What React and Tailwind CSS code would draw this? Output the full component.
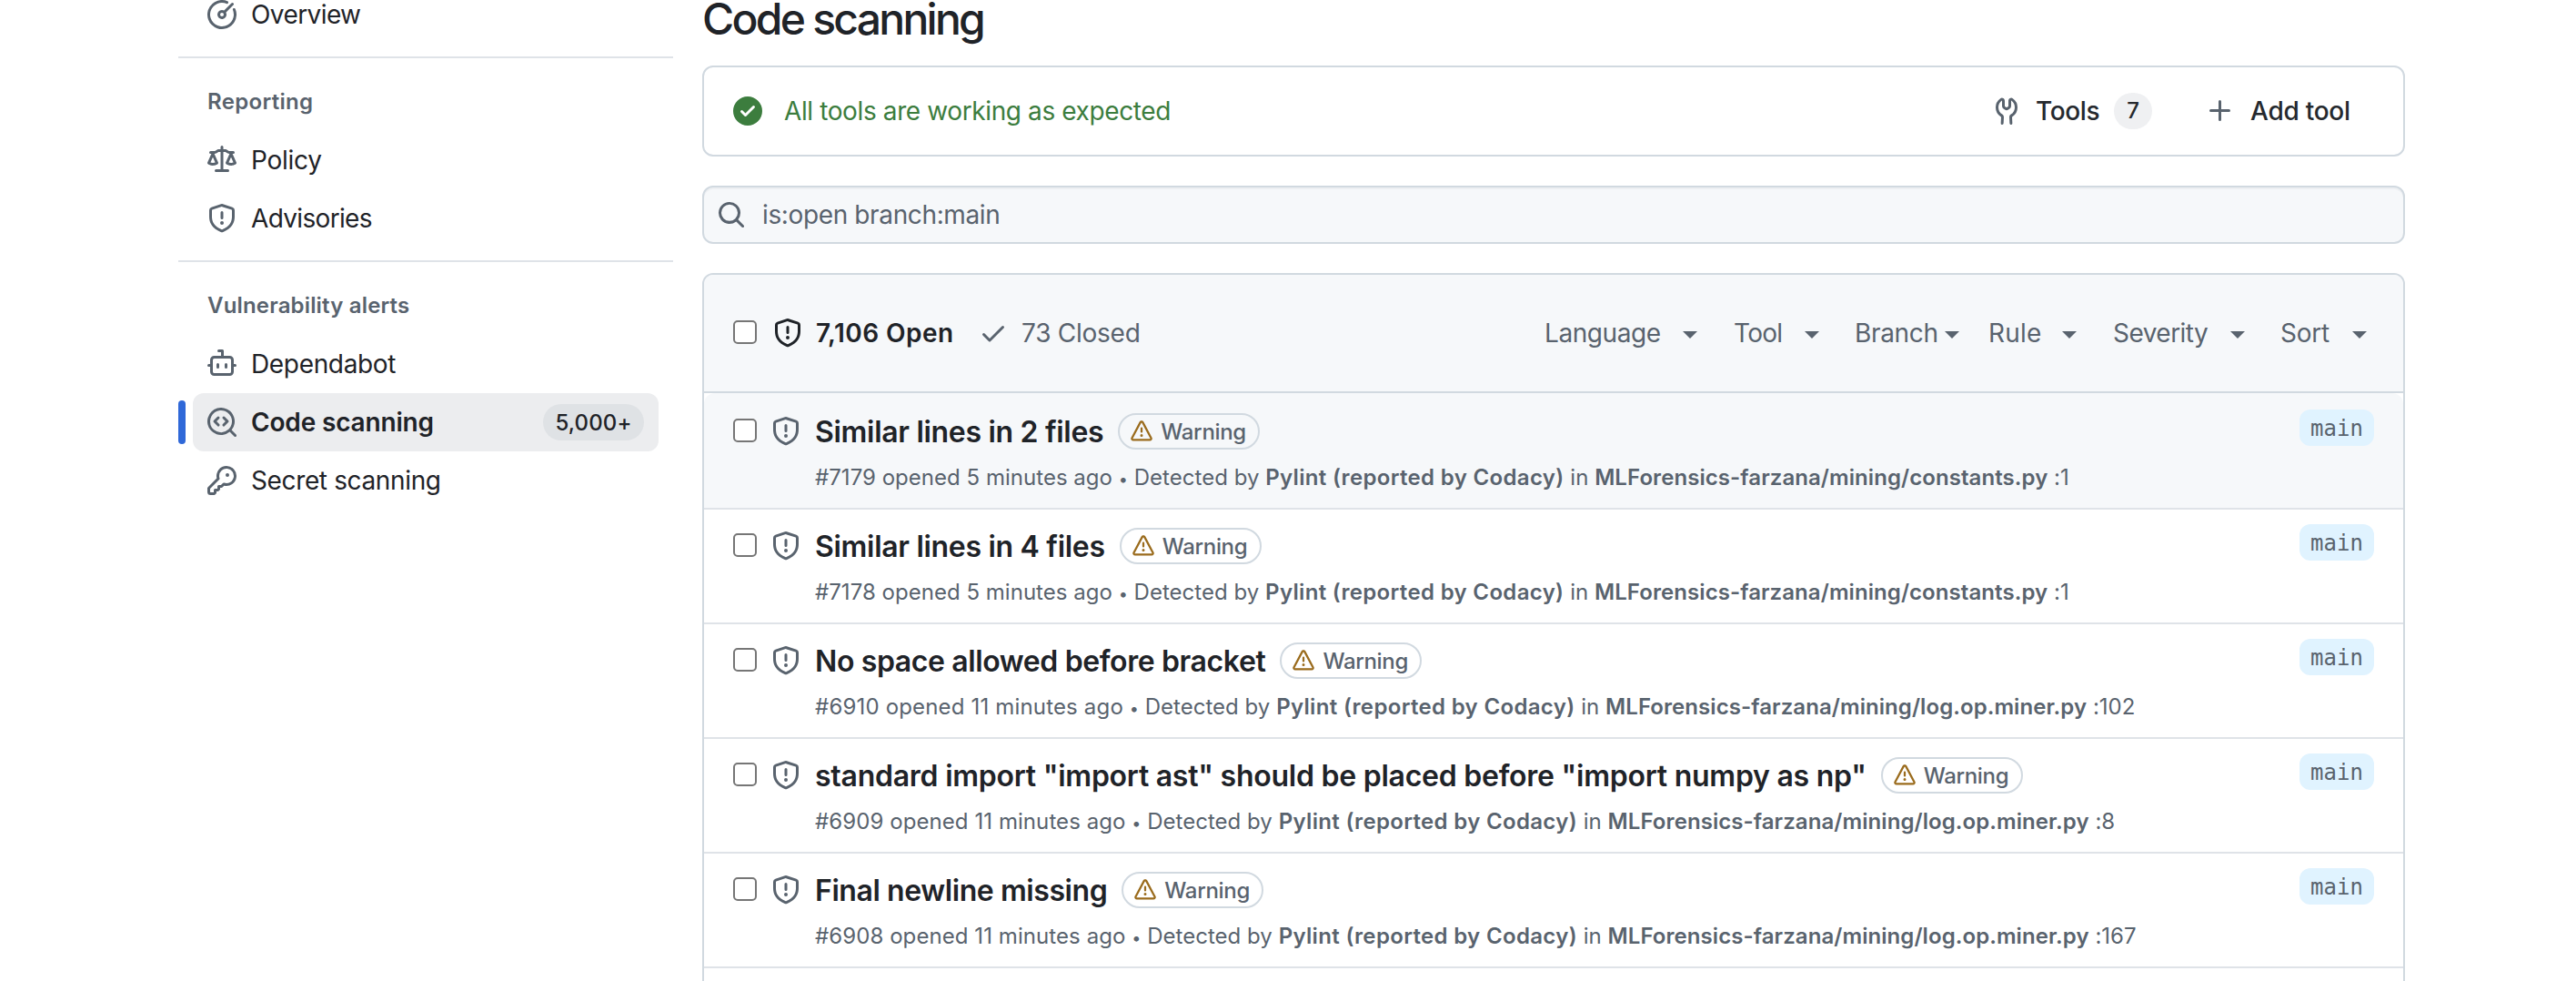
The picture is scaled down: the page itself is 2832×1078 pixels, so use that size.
import React from "react";

const ICONS = {
  meter: [
    "M8 1.5a6.5 6.5 0 1 0 6.016 4.035.75.75 0 0 1 1.388-.57 8 8 0 1 1-4.37-4.37.75.75 0 0 1-.569 1.389A6.479 6.479 0 0 0 8 1.5Zm6.28.22a.75.75 0 0 1 0 1.06l-4.063 4.064a2.5 2.5 0 1 1-1.06-1.06L13.22 1.72a.75.75 0 0 1 1.06 0ZM7 8a1 1 0 1 0 2 0 1 1 0 0 0-2 0Z",
  ],
  law: [
    "M8.75.75V2h.985c.304 0 .603.08.867.231l1.29.736c.038.022.08.033.124.033h2.234a.75.75 0 0 1 0 1.5h-.427l2.111 4.692a.75.75 0 0 1-.154.838l-.53-.53.529.531-.001.002-.002.002-.006.006-.006.005-.01.01-.045.04c-.21.176-.441.327-.686.45C14.556 10.78 13.88 11 13 11a4.498 4.498 0 0 1-2.023-.454 3.544 3.544 0 0 1-.686-.45l-.045-.04-.016-.015-.006-.006-.004-.004v-.001a.75.75 0 0 1-.154-.838L12.178 4.5h-.162c-.305 0-.604-.079-.868-.231l-1.29-.736a.245.245 0 0 0-.124-.033H8.75V13h2.5a.75.75 0 0 1 0 1.5h-6.5a.75.75 0 0 1 0-1.5h2.5V3.5h-.984a.245.245 0 0 0-.124.033l-1.289.737c-.265.15-.564.23-.869.23h-.162l2.112 4.692a.75.75 0 0 1-.154.838l-.53-.53.529.531-.001.002-.002.002-.006.006-.016.015-.045.04c-.21.176-.441.327-.686.45C4.556 10.78 3.88 11 3 11a4.498 4.498 0 0 1-2.023-.454 3.544 3.544 0 0 1-.686-.45l-.045-.04-.016-.015-.006-.006-.004-.004v-.001a.75.75 0 0 1-.154-.838L2.178 4.5H1.75a.75.75 0 0 1 0-1.5h2.234a.249.249 0 0 0 .125-.033l1.288-.737c.265-.15.564-.23.869-.23h.984V.75a.75.75 0 0 1 1.5 0Zm2.945 8.477c.285.135.718.273 1.305.273s1.02-.138 1.305-.273L13 6.327Zm-10 0c.285.135.718.273 1.305.273s1.02-.138 1.305-.273L3 6.327Z",
  ],
  shield: [
    "M7.467.133a1.748 1.748 0 0 1 1.066 0l5.25 1.68A1.75 1.75 0 0 1 15 3.48V7c0 1.566-.32 3.182-1.303 4.682-.983 1.498-2.585 2.813-5.032 3.855a1.697 1.697 0 0 1-1.33 0c-2.447-1.042-4.049-2.357-5.032-3.855C1.32 10.182 1 8.566 1 7V3.48a1.755 1.755 0 0 1 1.217-1.667Zm.61 1.429a.25.25 0 0 0-.153 0l-5.25 1.68a.25.25 0 0 0-.174.238V7c0 1.358.275 2.666 1.057 3.86.784 1.194 2.121 2.34 4.366 3.297a.196.196 0 0 0 .154 0c2.245-.956 3.582-2.104 4.366-3.298C13.225 9.666 13.5 8.36 13.5 7V3.48a.251.251 0 0 0-.174-.237l-5.25-1.68ZM8.75 4.75v3a.75.75 0 0 1-1.5 0v-3a.75.75 0 0 1 1.5 0ZM9 10.5a1 1 0 1 1-2 0 1 1 0 0 1 2 0Z",
  ],
  dependabot: [
    "M5.75 7.5a.75.75 0 0 1 .75.75v1.5a.75.75 0 0 1-1.5 0v-1.5a.75.75 0 0 1 .75-.75Zm5.25.75a.75.75 0 0 0-1.5 0v1.5a.75.75 0 0 0 1.5 0v-1.5Z",
    "M6.25 0h2A.75.75 0 0 1 9 .75V3.5h3.25a2.25 2.25 0 0 1 2.25 2.25V8h.75a.75.75 0 0 1 0 1.5h-.75v2.75a2.25 2.25 0 0 1-2.25 2.25h-8.5a2.25 2.25 0 0 1-2.25-2.25V9.5H.75a.75.75 0 0 1 0-1.5h.75V5.75A2.25 2.25 0 0 1 3.75 3.5H7.5v-2H6.25a.75.75 0 0 1 0-1.5ZM3 5.75v6.5c0 .414.336.75.75.75h8.5a.75.75 0 0 0 .75-.75v-6.5a.75.75 0 0 0-.75-.75h-8.5a.75.75 0 0 0-.75.75Z",
  ],
  codescan: [
    "M8.47 4.97a.75.75 0 0 0 0 1.06L9.94 7.5 8.47 8.97a.75.75 0 1 0 1.06 1.06l2-2a.75.75 0 0 0 0-1.06l-2-2a.75.75 0 0 0-1.06 0ZM6.53 6.03a.75.75 0 0 0-1.06-1.06l-2 2a.75.75 0 0 0 0 1.06l2 2a.75.75 0 1 0 1.06-1.06L5.06 7.5l1.47-1.47Z",
    "M12.246 13.307a7.501 7.501 0 1 1 1.06-1.06l2.474 2.473a.749.749 0 0 1-.326 1.275.749.749 0 0 1-.734-.215ZM1.5 7.5a6.002 6.002 0 0 0 3.608 5.504 6.002 6.002 0 0 0 6.486-1.117.748.748 0 0 1 .292-.293A6 6 0 1 0 1.5 7.5Z",
  ],
  key: [
    "M10.5 0a5.499 5.499 0 1 1-1.288 10.848l-.932.932a.749.749 0 0 1-.53.22H7v.75a.749.749 0 0 1-.22.53l-.5.5a.749.749 0 0 1-.53.22H5v.75a.749.749 0 0 1-.22.53l-.5.5a.749.749 0 0 1-.53.22h-2A1.75 1.75 0 0 1 0 14.25v-2c0-.199.079-.389.22-.53l4.932-4.932A5.5 5.5 0 0 1 10.5 0Zm-4 5.5c-.001.431.069.86.205 1.269a.75.75 0 0 1-.181.768L1.5 12.56v1.69c0 .138.112.25.25.25h1.69l.06-.06v-1.19a.75.75 0 0 1 .75-.75h1.19l.06-.06v-1.19a.75.75 0 0 1 .75-.75h1.19l1.023-1.025a.75.75 0 0 1 .768-.18A4 4 0 1 0 6.5 5.5ZM11 6a1 1 0 1 1 0-2 1 1 0 0 1 0 2Z",
  ],
  checkCircle: [
    "M8 16A8 8 0 1 1 8 0a8 8 0 0 1 0 16Zm3.78-9.72a.751.751 0 0 0-.018-1.042.751.751 0 0 0-1.042-.018L6.75 9.19 5.28 7.72a.751.751 0 0 0-1.042.018.751.751 0 0 0-.018 1.042l2 2a.75.75 0 0 0 1.06 0Z",
  ],
  tools: [
    "M5.433 2.304A4.492 4.492 0 0 0 3.5 6c0 1.598.832 3.002 2.09 3.802.518.328.929.923.902 1.64v.008l-.164 3.337a.75.75 0 1 1-1.498-.073l.163-3.33c.002-.085-.05-.216-.207-.316A5.996 5.996 0 0 1 2 6a5.993 5.993 0 0 1 2.567-4.92 1.482 1.482 0 0 1 1.673-.04c.462.296.76.827.76 1.423v2.82c0 .082.041.16.11.206l.75.51a.25.25 0 0 0 .28 0l.75-.51A.249.249 0 0 0 9 5.282V2.463c0-.596.298-1.127.76-1.423a1.482 1.482 0 0 1 1.673.04A5.993 5.993 0 0 1 14 6a5.996 5.996 0 0 1-2.786 5.068c-.157.1-.209.23-.207.315l.163 3.33a.752.752 0 0 1-1.094.714.75.75 0 0 1-.404-.64l-.164-3.345c-.027-.717.384-1.312.902-1.64A4.495 4.495 0 0 0 12.5 6a4.492 4.492 0 0 0-1.933-3.696c-.024.017-.067.067-.067.16v2.818a1.75 1.75 0 0 1-.767 1.448l-.75.51a1.75 1.75 0 0 1-1.966 0l-.75-.51A1.75 1.75 0 0 1 5.5 5.282V2.463c0-.092-.043-.142-.067-.159Z",
  ],
  plus: [
    "M7.75 2a.75.75 0 0 1 .75.75V7h4.25a.75.75 0 0 1 0 1.5H8.5v4.25a.75.75 0 0 1-1.5 0V8.5H2.75a.75.75 0 0 1 0-1.5H7V2.75A.75.75 0 0 1 7.75 2Z",
  ],
  search: [
    "M10.68 11.74a6 6 0 0 1-7.922-8.982 6 6 0 0 1 8.982 7.922l3.04 3.04a.749.749 0 0 1-.326 1.275.749.749 0 0 1-.734-.215ZM11.5 7a4.499 4.499 0 1 0-8.997 0A4.499 4.499 0 0 0 11.5 7Z",
  ],
  check: [
    "M13.78 4.22a.75.75 0 0 1 0 1.06l-7.25 7.25a.75.75 0 0 1-1.06 0L2.22 9.28a.751.751 0 0 1 .018-1.042.751.751 0 0 1 1.042-.018L6 10.94l6.72-6.72a.75.75 0 0 1 1.06 0Z",
  ],
  alert: [
    "M6.457 1.047c.659-1.234 2.427-1.234 3.086 0l6.082 11.378A1.75 1.75 0 0 1 14.082 15H1.918a1.75 1.75 0 0 1-1.543-2.575Zm1.763.707a.25.25 0 0 0-.44 0L1.698 13.132a.25.25 0 0 0 .22.368h12.164a.25.25 0 0 0 .22-.368Zm.53 3.996v2.5a.75.75 0 0 1-1.5 0v-2.5a.75.75 0 0 1 1.5 0ZM9 11a1 1 0 1 1-2 0 1 1 0 0 1 2 0Z",
  ],
};

function Icon({ name, className = "size-8 text-[#59636e]" }) {
  return (
    <svg viewBox="0 0 16 16" fill="currentColor" aria-hidden="true" className={`shrink-0 ${className}`}>
      {ICONS[name].map((d) => (
        <path key={d} d={d} />
      ))}
    </svg>
  );
}

function NavItem({ icon, label, tracking, active, count }) {
  return (
    <div className="flex h-16 items-center">
      <div className={`h-12 w-2 shrink-0 rounded-full ${active ? "bg-[#2f68d8]" : ""}`} />
      <a
        className={`mr-4 ml-2 flex h-16 grow items-center rounded-xl px-4 text-[28px] leading-8 text-[#1f2328] ${
          active ? "bg-[#ecedef] font-semibold" : ""
        }`}
      >
        <Icon name={icon} />
        <span className={`ml-4 whitespace-nowrap ${tracking}`}>{label}</span>
        {count && (
          <span className="ml-auto flex h-10 w-[111px] items-center justify-center rounded-full bg-[#dfe2e5] pt-px text-2xl font-medium tracking-[0.005em]">
            {count}
          </span>
        )}
      </a>
    </div>
  );
}

function NavHeading({ children, tracking }) {
  return (
    <h3 className={`h-20 pt-4 pl-8 text-2xl leading-[64px] font-semibold text-[#59636e] ${tracking}`}>{children}</h3>
  );
}

function Divider() {
  return <div className="mt-[14px] h-0.5 bg-[#dfe3e8]" />;
}

function Sidebar() {
  return (
    <nav className="-mt-4 w-[544px] shrink-0">
      <NavItem icon="meter" label="Overview" tracking="tracking-[-0.021em]" />
      <Divider />
      <NavHeading tracking="tracking-[0.013em]">Reporting</NavHeading>
      <NavItem icon="law" label="Policy" tracking="tracking-[-0.009em]" />
      <NavItem icon="shield" label="Advisories" tracking="tracking-[-0.024em]" />
      <Divider />
      <NavHeading tracking="tracking-[0.007em]">Vulnerability alerts</NavHeading>
      <NavItem icon="dependabot" label="Dependabot" tracking="tracking-[-0.012em]" />
      <NavItem icon="codescan" label="Code scanning" tracking="tracking-[-0.006em]" active count="5,000+" />
      <NavItem icon="key" label="Secret scanning" tracking="tracking-[-0.013em]" />
    </nav>
  );
}

function Checkbox() {
  return (
    <input
      type="checkbox"
      className="size-[26px] shrink-0 appearance-none rounded-[5px] border-2 border-[#767676] bg-white"
    />
  );
}

const FILTERS = [
  { label: "Language", box: "w-[168px]", tracking: "tracking-[-0.015em]" },
  { label: "Tool", box: "ml-10 w-[94px]", tracking: "tracking-[-0.025em]" },
  { label: "Branch", box: "ml-[39px] w-[115px]", tracking: "tracking-[-0.0116em]" },
  { label: "Rule", box: "ml-8 w-[97px]", tracking: "tracking-[0.007em]" },
  { label: "Severity", box: "ml-10 w-[145px]", tracking: "tracking-[-0.019em]" },
  { label: "Sort", box: "ml-[39px] w-[95px]", tracking: "tracking-[-0.009em]" },
];

function Filter({ label, box, tracking }) {
  return (
    <div className={`flex items-center justify-between ${box}`}>
      <span className={tracking}>{label}</span>
      <span className="mt-1 h-0 w-0 border-x-8 border-t-8 border-x-transparent border-t-[#59636e]" />
    </div>
  );
}

const CONSTANTS = "MLForensics-farzana/mining/constants.py";
const MINER = "MLForensics-farzana/mining/log.op.miner.py";

const ALERTS = [
  {
    title: "Similar lines in 2 files",
    tracking: "tracking-[-0.0096em]",
    id: 7179,
    age: "5 minutes ago",
    ageTracking: "tracking-[0.001em]",
    path: CONSTANTS,
    line: 1,
  },
  {
    title: "Similar lines in 4 files",
    tracking: "tracking-[-0.0096em]",
    id: 7178,
    age: "5 minutes ago",
    ageTracking: "tracking-[0.001em]",
    path: CONSTANTS,
    line: 1,
  },
  {
    title: "No space allowed before bracket",
    tracking: "tracking-[-0.012em]",
    id: 6910,
    age: "11 minutes ago",
    ageTracking: "tracking-[0.007em]",
    path: MINER,
    line: 102,
  },
  {
    title: 'standard import "import ast" should be placed before "import numpy as np"',
    tracking: "tracking-[-0.0077em]",
    id: 6909,
    age: "11 minutes ago",
    ageTracking: "tracking-[0.003em]",
    path: MINER,
    line: 8,
  },
  {
    title: "Final newline missing",
    tracking: "tracking-[-0.013em]",
    id: 6908,
    age: "11 minutes ago",
    ageTracking: "tracking-[0.003em]",
    path: MINER,
    line: 167,
  },
];

function AlertRow({ alert, first }) {
  return (
    <li
      className={`flex h-[126px] items-start border-t-2 px-8 ${
        first ? "rounded-t-xl border-transparent bg-[#f6f8fa]" : "border-[#dfe3e8]"
      }`}
    >
      <div className="flex pt-[26px]">
        <Checkbox />
      </div>
      <Icon name="shield" className="mt-6 ml-4 size-8 text-[#59636e]" />
      <div className="ml-4 grow pt-5">
        <div className="flex h-10 items-center">
          <a className={`pt-0.5 text-[32px] leading-10 font-semibold whitespace-nowrap text-[#1f2328] ${alert.tracking}`}>
            {alert.title}
          </a>
          <span className="ml-4 flex h-10 w-[156px] items-center rounded-full border-2 border-[#d1d9e0] pl-3 text-2xl leading-8 font-medium tracking-[-0.013em] text-[#59636e]">
            <Icon name="alert" className="-mt-px mr-[9px] size-6 text-[#9a6b1c]" />
            <span className="pt-px">Warning</span>
          </span>
        </div>
        <div className="mt-[13px] text-2xl leading-9 tracking-[0.001em] whitespace-nowrap text-[#59636e]">
          <span className={alert.ageTracking}>
            #{alert.id} opened {alert.age}
          </span>{" "}
          <span className="text-[18px]">•</span> Detected by{" "}
          <span className="font-semibold tracking-[0.014em]">Pylint (reported by Codacy)</span> in{" "}
          <span className="font-semibold tracking-[0.003em]">{alert.path}</span> :{alert.line}
        </div>
      </div>
      <span className="mt-4 flex h-10 w-[82px] shrink-0 items-center justify-center rounded-xl bg-[#e0f3ff] pt-0.5 font-['DejaVu_Sans_Mono',monospace] text-2xl leading-8 text-[#59636e]">
        main
      </span>
    </li>
  );
}

function ToolStatus() {
  return (
    <section className="mt-[22px] flex h-[100px] items-center rounded-xl border-2 border-[#d1d9e0] pl-8 text-[28px]">
      <Icon name="checkCircle" className="size-8 text-[#3c7d3e]" />
      <span className="ml-6 tracking-[-0.0138em] text-[#3c7d3e]">All tools are working as expected</span>
      <div className="ml-auto flex items-center font-medium text-[#25292e]">
        <Icon name="tools" />
        <span className="ml-4 w-[86px] tracking-[-0.013em]">Tools</span>
        <span className="flex h-10 w-[42px] items-center justify-center rounded-full bg-[#eff0f2] text-2xl">7</span>
        <Icon name="plus" className="ml-[59px] size-8 text-[#59636e]" />
        <span className="ml-[17px] w-[168px] tracking-[-0.009em]">Add tool</span>
      </div>
    </section>
  );
}

export default function App() {
  return (
    <div className="flex h-[1078px] w-[2832px] overflow-hidden bg-white pl-[196px] font-[Inter,sans-serif] text-[#1f2328]">
      <Sidebar />
      <main className="ml-8 w-[1872px] shrink-0">
        <h1 className="h-[50px] text-[48px] leading-[42px] font-medium tracking-[-0.057em]">Code scanning</h1>
        <ToolStatus />
        <div className="mt-8 flex h-16 items-center rounded-xl border-2 border-[#d1d9e0] bg-[#f6f8fa] pl-3.5 text-[28px] text-[#59636e] shadow-[inset_0_2px_0_rgba(31,35,40,0.04)]">
          <Icon name="search" />
          <span className="ml-[18px] tracking-[-0.0132em]">is:open branch:main</span>
        </div>
        <section className="mt-8 h-[900px] rounded-xl border-2 border-[#d1d9e0]">
          <header className="flex h-[130px] items-center rounded-t-[10px] border-b-2 border-[#d1d9e0] bg-[#f6f8fa] pr-10 pl-8 text-[28px] text-[#59636e]">
            <div className="-mt-0.5 flex">
              <Checkbox />
            </div>
            <Icon name="shield" className="ml-[18px] size-8 text-[#1f2328]" />
            <span className="ml-[15px] w-[179px] font-semibold tracking-[0.016em] text-[#1f2328]">7,106 Open</span>
            <Icon name="check" />
            <span className="ml-[15px] tracking-[-0.009em]">73 Closed</span>
            <div className="ml-auto flex items-center">
              {FILTERS.map((f) => (
                <Filter key={f.label} {...f} />
              ))}
            </div>
          </header>
          <ul>
            {ALERTS.map((a, i) => (
              <AlertRow key={a.id} alert={a} first={i === 0} />
            ))}
            <li className="border-t-2 border-[#dfe3e8]" />
          </ul>
        </section>
      </main>
    </div>
  );
}
